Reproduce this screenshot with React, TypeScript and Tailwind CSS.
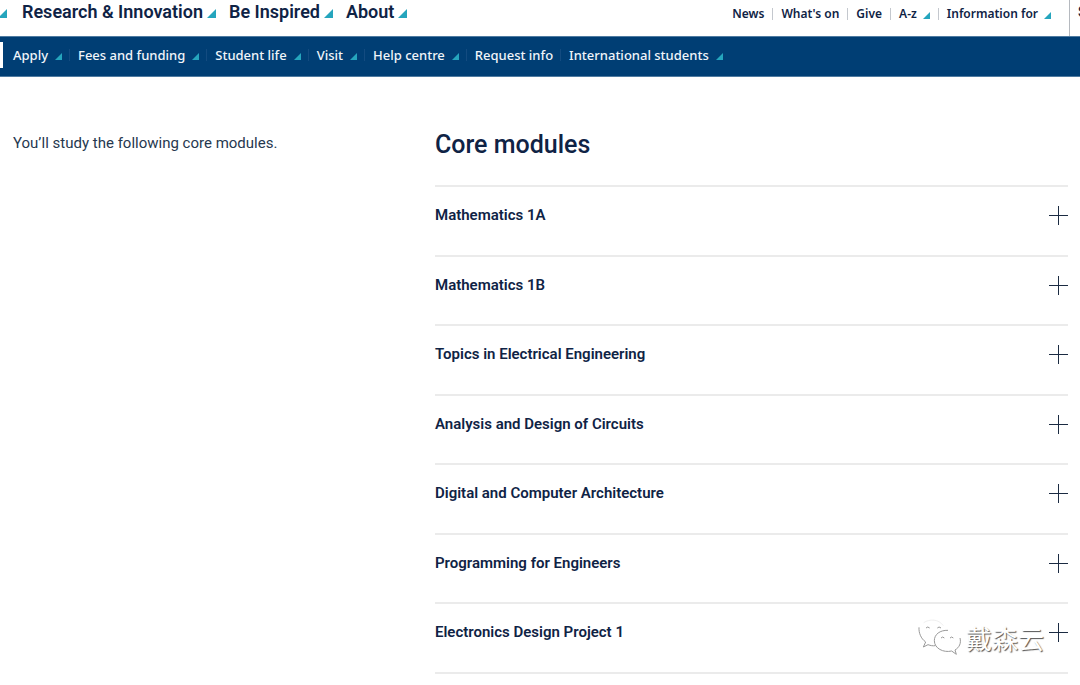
import React, { useState } from 'react';

type NavItem = { label: string; menu?: boolean };

const MAIN_NAV: NavItem[] = [
  { label: 'Research & Innovation', menu: true },
  { label: 'Be Inspired', menu: true },
  { label: 'About', menu: true },
];

const UTILITY_NAV: NavItem[] = [
  { label: 'News' },
  { label: "What's on" },
  { label: 'Give' },
  { label: 'A-z', menu: true },
  { label: 'Information for', menu: true },
];

const SECTION_NAV: NavItem[] = [
  { label: 'Apply', menu: true },
  { label: 'Fees and funding', menu: true },
  { label: 'Student life', menu: true },
  { label: 'Visit', menu: true },
  { label: 'Help centre', menu: true },
  { label: 'Request info' },
  { label: 'International students', menu: true },
];

const MODULES = [
  'Mathematics 1A',
  'Mathematics 1B',
  'Topics in Electrical Engineering',
  'Analysis and Design of Circuits',
  'Digital and Computer Architecture',
  'Programming for Engineers',
  'Electronics Design Project 1',
];

function Corner({ className }: { className: string }) {
  return (
    <svg viewBox="0 0 9 9" className={`shrink-0 fill-[#25a5bd] ${className}`} aria-hidden="true">
      <path d="M9 0v9H0z" />
    </svg>
  );
}

function PlusIcon() {
  return (
    <svg viewBox="0 0 19 19" className="size-[19px] shrink-0 stroke-[#1b2b42]" fill="none" aria-hidden="true">
      <path d="M9.5 0v19M0 9.5h19" />
    </svg>
  );
}

function Header() {
  return (
    <header className="flex h-9 justify-between overflow-hidden whitespace-nowrap text-[#0f2345]">
      <nav aria-label="Main" className="flex h-6 items-center">
        <Corner className="mt-0.5 -ml-0.5 size-[9px]" />
        <ul className="ml-0.5 flex">
          {MAIN_NAV.map((item) => (
            <li key={item.label}>
              <a href="#" className="ml-[13px] flex items-center gap-1 text-lg/6 font-semibold">
                {item.label}
                <Corner className="mt-0.5 size-[9px]" />
              </a>
            </li>
          ))}
        </ul>
      </nav>
      <div className="flex">
        <nav aria-label="Utility" className="flex h-7 items-center pr-[18px] font-['Noto_Sans',sans-serif]">
          <ul className="flex">
            {UTILITY_NAV.map((item) => (
              <li key={item.label} className="border-l border-[#c4c8ce] pr-2 pl-2 first:border-l-0 last:pr-0">
                <a href="#" className="flex items-center gap-1.5 text-xs/3 font-semibold">
                  {item.label}
                  {item.menu && <Corner className="mt-0.5 size-[7px]" />}
                </a>
              </li>
            ))}
          </ul>
        </nav>
        <button type="button" className="w-[11px] overflow-hidden border-l border-[#b5b9bf] pb-3 pl-2 text-left text-sm font-semibold">
          S
        </button>
      </div>
    </header>
  );
}

function SectionNav() {
  return (
    <nav
      aria-label="Section"
      className="flex h-[41px] items-center overflow-hidden border-y border-[#4f7ba1] bg-[#003e74] pb-1 whitespace-nowrap text-[#f0f5fa]"
    >
      <span className="mr-0.5 h-[26px] w-[3px] shrink-0 bg-white" />
      <ul className="flex font-['Noto_Sans',sans-serif]">
        {SECTION_NAV.map((item) => (
          <li key={item.label} className="border-l border-[#134b80] pr-[7px] pl-2 first:border-l-0">
            <a href="#" className="flex items-center gap-[7px] text-[13px]/3 font-medium">
              {item.label}
              {item.menu && <Corner className="mt-1 size-[7px]" />}
            </a>
          </li>
        ))}
      </ul>
    </nav>
  );
}

function ModuleRow({ name }: { name: string }) {
  const [open, setOpen] = useState(false);

  return (
    <li className="border-t-2 border-[#ebebeb] odd:min-h-[70px] even:min-h-[69px]">
      <h3>
        <button
          type="button"
          aria-expanded={open}
          onClick={() => setOpen(!open)}
          className="flex w-full cursor-pointer items-center justify-between pt-4 pb-5 text-left text-[15px]/6 font-semibold text-[#0f2345]"
        >
          {name}
          <PlusIcon />
        </button>
      </h3>
    </li>
  );
}

function Watermark() {
  return (
    <div className="pointer-events-none absolute right-9 bottom-7 flex items-center gap-1">
      <svg viewBox="20 25 135 114" className="h-[38px] w-[45px]" fill="none" stroke="#999" strokeWidth="3" aria-hidden="true">
        <path d="M26 50c-1 16 5 33 20 44l-7 15 14-7c8 3 14 4 22 3" />
        <path d="M40 36c18-12 45-11 59 9" stroke="#f0f0f0" />
        <path d="M113 59c-24-1-41 12-41 31 0 23 27 37 52 31l14 10-4-13c13-8 19-20 15-36" />
        <path d="M47 52q5-6 11 0M81 52q5-6 11 0M92 82q5-6 10 0M119 82q5-6 10 0" />
      </svg>
      <span className="font-['Noto_Sans_CJK_SC',sans-serif] text-[26px]/8 text-white [text-shadow:1px_1px_1px_#555]">
        戴森云
      </span>
    </div>
  );
}

export default function App() {
  return (
    <div className="relative min-h-screen bg-white font-[Roboto,sans-serif]">
      <Header />
      <SectionNav />
      <main className="grid grid-cols-[2fr_3fr] pt-[50px] pr-3 pl-[13px]">
        <p className="pt-1 text-[15px]/6 text-[#26384f]">You’ll study the following core modules.</p>
        <section>
          <h2 className="text-[25px]/9 font-medium text-[#0f2345]">Core modules</h2>
          <ul className="mt-[22px] border-b-2 border-[#ebebeb]">
            {MODULES.map((name) => (
              <ModuleRow key={name} name={name} />
            ))}
          </ul>
        </section>
      </main>
      <Watermark />
    </div>
  );
}
